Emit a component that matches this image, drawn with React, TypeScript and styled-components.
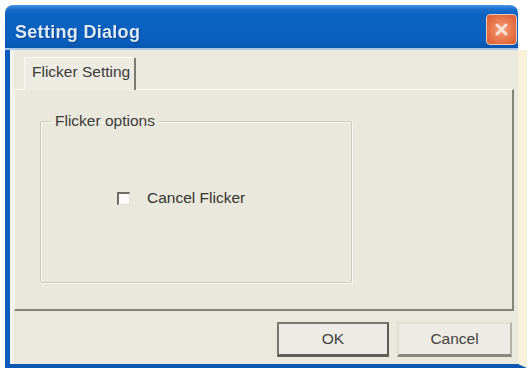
import React from "react";
import styled, { createGlobalStyle } from "styled-components";

const GlobalStyle = createGlobalStyle`
  html, body { margin: 0; padding: 0; background: #ffffff; }
  body { font-family: "Liberation Sans", Arial, sans-serif; }
`;

const Window = styled.div`
  margin: 5px 0 0 5px;
  width: 522px;
  display: flex;
  flex-direction: column;
  filter: blur(0.45px);
`;

const TitleBar = styled.div`
  height: 43px;
  margin-right: 9px;
  border-radius: 8px 8px 0 0;
  background: linear-gradient(
    to bottom,
    #4a96e2 0px,
    #1d6fcc 4px,
    #0a62c1 10px,
    #0a60bf 34px,
    #0656b0 43px
  );
  border-bottom: 2px solid #a9c6e6;
  display: flex;
  align-items: flex-start;
  justify-content: space-between;
  padding: 0 1px 0 10px;
`;

const Title = styled.span`
  margin-top: 16px;
  font-size: 18px;
  line-height: 22px;
  font-weight: 700;
  letter-spacing: 0.3px;
  color: #dfeaf8;
  text-shadow: 1px 1px 1px #0a3f86;
`;

const CloseButton = styled.div`
  margin-top: 9px;
  width: 31px;
  height: 31px;
  box-sizing: border-box;
  border: 1px solid #f2c9b4;
  border-radius: 4px;
  background: radial-gradient(circle at 50% 50%, #f3a07c 0%, #e8764c 55%, #d9582f 100%);
  display: flex;
  align-items: center;
  justify-content: center;
`;

const Body = styled.div`
  height: 318px;
  box-sizing: border-box;
  background: #ebe8dd;
  border-left: 5px solid #0c5cbf;
  border-bottom: 4px solid #0c57b4;
  border-right: 9px solid #f8f2da;
  box-shadow: inset 4px 0 0 #f5f3ec;
  padding: 7px 4px 0 4px;
  display: flex;
  flex-direction: column;
`;

const TabStrip = styled.div`
  height: 32px;
  display: flex;
  align-items: flex-end;
  padding-left: 10px;
  position: relative;
  z-index: 1;
`;

const Tab = styled.div`
  width: 112px;
  height: 33px;
  margin-bottom: -1px;
  box-sizing: border-box;
  background: #eeebe2;
  border-top: 1px solid #fbfaf5;
  border-left: 1px solid #fbfaf5;
  border-right: 2px solid #7d7b71;
  border-radius: 2px 2px 0 0;
  padding: 3px 0 0 7px;
  font-size: 15.5px;
  line-height: 22px;
  color: #3a3a36;
  white-space: nowrap;
`;

const Panel = styled.div`
  height: 222px;
  box-sizing: border-box;
  background: #eae7dc;
  border-top: 1px solid #fbfaf5;
  border-left: 1px solid #fbfaf5;
  border-right: 2px solid #86847a;
  border-bottom: 2px solid #85837a;
  padding: 22px 0 0 25px;
`;

const GroupBox = styled.fieldset`
  margin: 0;
  padding: 0;
  width: 312px;
  height: 171px;
  box-sizing: border-box;
  border: 1px solid #cdcabd;
  border-radius: 2px;
  box-shadow: 1px 1px 0 #f8f7f1, inset 1px 1px 0 #f8f7f1;
`;

const GroupLegend = styled.legend`
  margin-left: 11px;
  padding: 0 3px;
  font-size: 15.5px;
  line-height: 18px;
  color: #3a3a36;
`;

const CheckRow = styled.label`
  display: flex;
  align-items: center;
  gap: 17px;
  margin: 59px 0 0 76px;
  font-size: 15.5px;
  line-height: 18px;
  color: #34342f;
`;

const CheckBox = styled.span`
  width: 13px;
  height: 13px;
  box-sizing: border-box;
  background: #fbfbf8;
  border-top: 2px solid #6e6c64;
  border-left: 2px solid #6e6c64;
  border-right: 1px solid #e2dfd4;
  border-bottom: 1px solid #e2dfd4;
`;

const ButtonRow = styled.div`
  margin-top: 11px;
  display: flex;
  justify-content: flex-end;
  gap: 8px;
  padding-right: 2px;
`;

const Button = styled.div<{ $default?: boolean }>`
  width: ${(p) => (p.$default ? "112px" : "115px")};
  height: 35px;
  box-sizing: border-box;
  background: #edebe3;
  display: flex;
  align-items: center;
  justify-content: center;
  font-size: 15.5px;
  color: #44443f;
  border-top: 2px solid ${(p) => (p.$default ? "#78766d" : "#e0ddd2")};
  border-left: 2px solid ${(p) => (p.$default ? "#78766d" : "#e0ddd2")};
  border-right: 2px solid ${(p) => (p.$default ? "#5f5d55" : "#b4b1a6")};
  border-bottom: 3px solid ${(p) => (p.$default ? "#5f5d55" : "#8a887e")};
`;

export default function App() {
  return (
    <>
      <GlobalStyle />
      <Window>
        <TitleBar>
          <Title>Setting Dialog</Title>
          <CloseButton>
            <svg width="13" height="13" viewBox="0 0 13 13">
              <path d="M2 2 L11 11 M11 2 L2 11" stroke="#fbe3d8" strokeWidth="3" strokeLinecap="round" />
            </svg>
          </CloseButton>
        </TitleBar>
        <Body>
          <TabStrip>
            <Tab>Flicker Setting</Tab>
          </TabStrip>
          <Panel>
            <GroupBox>
              <GroupLegend>Flicker options</GroupLegend>
              <CheckRow>
                <CheckBox />
                Cancel Flicker
              </CheckRow>
            </GroupBox>
          </Panel>
          <ButtonRow>
            <Button $default>OK</Button>
            <Button>Cancel</Button>
          </ButtonRow>
        </Body>
      </Window>
    </>
  );
}
